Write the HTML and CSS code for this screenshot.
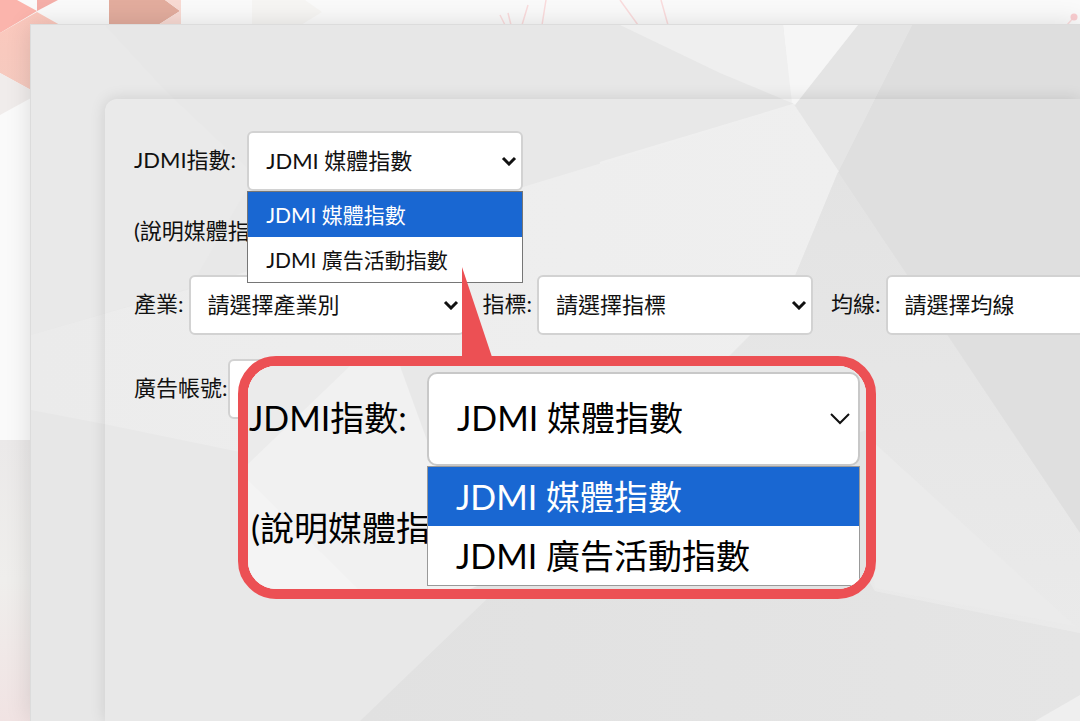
FILE: index.html
```
<!DOCTYPE html>
<html lang="zh-Hant">
<head>
    <meta charset="UTF-8">
    <meta name="viewport" content="width=device-width, initial-scale=1.0">
    <title>JDMI指數</title>
    <link rel="stylesheet" href="styles.css">
</head>
<body>
    <div class="page">
        <svg class="backdrop" viewBox="0 0 1080 721" preserveAspectRatio="xMinYMin slice" aria-hidden="true">
            <defs>
                <linearGradient id="peach" x1="0" y1="0" x2="0" y2="1">
                    <stop offset="0" stop-color="#fbc8bd"/>
                    <stop offset="1" stop-color="#f5cabf"/>
                </linearGradient>
                <linearGradient id="side" x1="0" y1="0" x2="0" y2="1">
                    <stop offset="0" stop-color="#ebe9e9"/>
                    <stop offset="0.5" stop-color="#efeeec"/>
                    <stop offset="1" stop-color="#f1e3e3"/>
                </linearGradient>
            </defs>
            <path fill="#fbb4ac" d="M0 0h17l20 11L0 33z"/>
            <path fill="#f4aea8" d="M37 0h21L37 11z"/>
            <path fill="url(#peach)" d="M37 12l23 13H31v65L0 73V33z"/>
            <path fill="#f0eceb" d="M0 73l31 17v8L0 115z"/>
            <path fill="#e2ac9d" d="M109 0h56l15 11-22 14h-49z"/>
            <path fill="#f8dad3" d="M165 0h16v25h-23l22-14z"/>
            <path fill="#f6f5f3" d="M252 0h53l17 12-21 13h-49z"/>
            <path fill="url(#side)" d="M0 440h31v281H0z"/>
            <path fill="none" stroke="#fadcdd" stroke-width="1.5" d="M500 15l5 10M508 13l3 12M528 5l-6 20M546 0l-4 25M620 0l18 25M661 0l7 25M1074 17l-7 8"/>
            <circle cx="1074" cy="17" r="3.5" fill="#f9cdd0"/>
        </svg>

        <main class="panel">
            <svg class="backdrop" viewBox="31 25 1049 696" preserveAspectRatio="xMinYMin slice" aria-hidden="true">
                <defs>
                    <linearGradient id="lower" x1="0" y1="0" x2="1" y2="0">
                        <stop offset="0" stop-color="#e0e0e0"/>
                        <stop offset="1" stop-color="#e4e4e4"/>
                    </linearGradient>
                    <linearGradient id="middle" x1="0" y1="0" x2="0" y2="1">
                        <stop offset="0" stop-color="#e2e2e2"/>
                        <stop offset="1" stop-color="#e9e9e9"/>
                    </linearGradient>
                    <linearGradient id="band" x1="0" y1="0" x2="1" y2="0">
                        <stop offset="0" stop-color="#ebebeb"/>
                        <stop offset="1" stop-color="#eeeeee"/>
                    </linearGradient>
                </defs>
                <path fill="#e7e7e7" d="M31 25h1049v696H31z"/>
                <path fill="#e9e9e9" d="M31 25h74l60 65 90 85-65 113-159 47z"/>
                <path fill="url(#band)" d="M31 335l159-46 333-102 270-82 45 67-53 128-60 60-235 240-250-148-136-28-73-14z"/>
                <path fill="url(#lower)" d="M360 721l130-125 230-240h60l95 235 205 42v88z"/>
                <path fill="url(#middle)" d="M838 172l242 361v100l-205-42-145-235 55-56z"/>
                <path fill="#eaeaea" d="M860 430l215 196-200-38z"/>
                <path fill="#dedede" d="M912 25h168v508L838 172z"/>
                <path fill="#e4e4e4" d="M858 25h54l-74 147-43-67z"/>
                <path fill="#f6f6f6" d="M783 25h75l-63 80-4-3z"/>
                <path fill="#efefef" d="M620 25h163l9 78-72-30z"/>
                <path fill="#eeeeee" d="M1035 721l45-26v26z"/>
                <path fill="none" stroke="#efefef" stroke-width="2" d="M600 163l193-58 45 67"/>
            </svg>

            <form class="card">
                <div class="row">
                    <div class="field">
                        <label class="label label-wide" for="index">JDMI指數:</label>
                        <div class="picker">
                            <select class="select" id="index">
                                <option>JDMI 媒體指數</option>
                                <option>JDMI 廣告活動指數</option>
                            </select>
                            <svg class="chevron" viewBox="0 0 16 10" aria-hidden="true"><path d="M2 2l6 6 6-6"/></svg>
                            <ul class="menu" role="listbox" aria-label="JDMI指數">
                                <li class="item active" role="option" aria-selected="true">JDMI 媒體指數</li>
                                <li class="item" role="option" aria-selected="false">JDMI 廣告活動指數</li>
                            </ul>
                        </div>
                    </div>
                </div>

                <p class="note">(說明媒體指數)</p>

                <div class="row">
                    <div class="field">
                        <label class="label" for="industry">產業:</label>
                        <div class="picker">
                            <select class="select" id="industry">
                                <option>請選擇產業別</option>
                            </select>
                            <svg class="chevron" viewBox="0 0 16 10" aria-hidden="true"><path d="M2 2l6 6 6-6"/></svg>
                        </div>
                    </div>
                    <div class="field">
                        <label class="label" for="metric">指標:</label>
                        <div class="picker">
                            <select class="select" id="metric">
                                <option>請選擇指標</option>
                            </select>
                            <svg class="chevron" viewBox="0 0 16 10" aria-hidden="true"><path d="M2 2l6 6 6-6"/></svg>
                        </div>
                    </div>
                    <div class="field">
                        <label class="label" for="average">均線:</label>
                        <div class="picker">
                            <select class="select" id="average">
                                <option>請選擇均線</option>
                            </select>
                            <svg class="chevron" viewBox="0 0 16 10" aria-hidden="true"><path d="M2 2l6 6 6-6"/></svg>
                        </div>
                    </div>
                </div>

                <div class="row">
                    <div class="field">
                        <label class="label label-tight" for="account">廣告帳號:</label>
                        <div class="picker">
                            <select class="select" id="account"></select>
                        </div>
                    </div>
                </div>
            </form>
        </main>

        <!-- enlarged view of the first field -->
        <section class="callout">
            <svg class="pointer" viewBox="0 0 30 90" aria-hidden="true"><path d="M0 0l30 90H0z"/></svg>
            <div class="lens">
                <svg class="backdrop" viewBox="248 366 618 223" preserveAspectRatio="xMinYMin slice" aria-hidden="true">
                    <path fill="#f1f1f1" d="M248 366h618v223H248z"/>
                    <path fill="#ebebeb" d="M248 366h102L248 464z"/>
                    <path fill="#e8e8e8" d="M400 366h466v110H440z"/>
                    <path fill="#f4f4f4" d="M248 480l110 109H248z"/>
                    <path fill="#e3e3e3" d="M470 589h396V430z"/>
                </svg>
                <div class="lens-row">
                    <label class="lens-label" for="index-large">JDMI指數:</label>
                    <div class="picker lens-picker">
                        <select class="select lens-select" id="index-large">
                            <option>JDMI 媒體指數</option>
                            <option>JDMI 廣告活動指數</option>
                        </select>
                        <svg class="chevron lens-chevron" viewBox="0 0 20 12" aria-hidden="true"><path d="M1 1l9 9 9-9"/></svg>
                        <ul class="menu lens-menu" role="listbox" aria-label="JDMI指數">
                            <li class="item lens-item active" role="option" aria-selected="true">JDMI 媒體指數</li>
                            <li class="item lens-item" role="option" aria-selected="false">JDMI 廣告活動指數</li>
                        </ul>
                    </div>
                </div>
                <p class="lens-note">(說明媒體指</p>
            </div>
        </section>
    </div>
</body>
</html>
```
FILE: styles.css
```
* {
    box-sizing: border-box;
}

body {
    margin: 0;
    overflow: hidden;
    font-family: Lato, "Noto Sans CJK TC", sans-serif;
    font-size: 22px;
    line-height: 32px;
    color: #111;
}

p, ul {
    margin: 0;
    padding: 0;
}

.page {
    position: relative;
    display: flex;
    height: 100vh;
    padding: 24px 0 0 30px;
    background: #fafafa;
    overflow: hidden;
}

.backdrop {
    position: absolute;
    top: 0;
    left: 0;
    width: 100%;
    height: 100%;
}

.panel {
    position: relative;
    display: flex;
    flex: 1;
    min-width: 0;
    padding: 74px 0 0 74px;
    border: solid #dcdcdc;
    border-width: 1px 0 0 1px;
    box-shadow: 0 0 24px rgba(0, 0, 0, 0.12);
}

.card {
    position: relative;
    display: flex;
    flex: 1;
    flex-direction: column;
    gap: 24px;
    min-width: 0;
    padding: 32px 0 0 29px;
    border-radius: 12px 0 0 0;
    background: rgba(255, 255, 255, 0.06);
    box-shadow: 0 0 16px rgba(0, 0, 0, 0.12);
}

.row {
    display: flex;
    gap: 18px;
}

.field {
    display: flex;
    flex: none;
    align-items: center;
}

.label {
    padding: 0 5px 2px 0;
    white-space: nowrap;
}

.label-wide {
    padding-right: 11px;
}

.label-tight {
    padding-right: 0;
}

.note {
    padding-bottom: 4px;
}

.picker {
    position: relative;
    display: grid;
    align-items: center;
    width: 276px;
}

/* select and arrow share one grid cell */
.select,
.chevron {
    grid-area: 1 / 1;
}

.select {
    width: 100%;
    height: 60px;
    padding: 0 17px;
    border: 2px solid #d2d2d2;
    border-radius: 6px;
    background: #fff;
    color: #111;
    font: inherit;
    appearance: none;
}

.chevron {
    justify-self: end;
    width: 16px;
    height: 10px;
    margin-right: 6px;
    fill: none;
    stroke: #111;
    stroke-width: 3;
    pointer-events: none;
}

.menu {
    position: absolute;
    z-index: 1;
    top: 100%;
    left: 0;
    width: 100%;
    border: 1px solid #767676;
    background: #fff;
    font-size: 21px;
    list-style: none;
}

.item {
    padding: 6px 18px;
    line-height: 33px;
    white-space: nowrap;
}

.item.active {
    background: #1967d2;
    color: #fff;
}

.callout {
    position: absolute;
    z-index: 2;
    top: 267px;
    left: 238px;
    width: 638px;
    color: #000;
    font-size: 34px;
    line-height: 48px;
}

.pointer {
    display: block;
    width: 30px;
    height: 90px;
    margin: 0 0 -1px 224px;
    fill: #ec5054;
}

.lens {
    position: relative;
    height: 243px;
    padding: 6px 6px 0 1px;
    border: 10px solid #ec5054;
    border-radius: 38px;
    overflow: hidden;
}

.lens-row {
    position: relative;
    display: flex;
    align-items: center;
    justify-content: space-between;
    margin-bottom: 38px;
}

.lens-label {
    padding-bottom: 2px;
}

.lens-picker {
    width: 433px;
}

.lens-select {
    height: 94px;
    padding: 0 28px 2px;
    border-color: #c8c8c8;
    border-radius: 10px;
    color: #000;
}

.lens-chevron {
    width: 20px;
    height: 12px;
    margin-right: 10px;
    stroke-width: 2;
}

.lens-menu {
    border-color: #999;
    font-size: 34px;
}

.lens-item {
    padding: 5px 28px;
    line-height: 49px;
}

.lens-note {
    position: relative;
    padding-left: 2px;
}
```
